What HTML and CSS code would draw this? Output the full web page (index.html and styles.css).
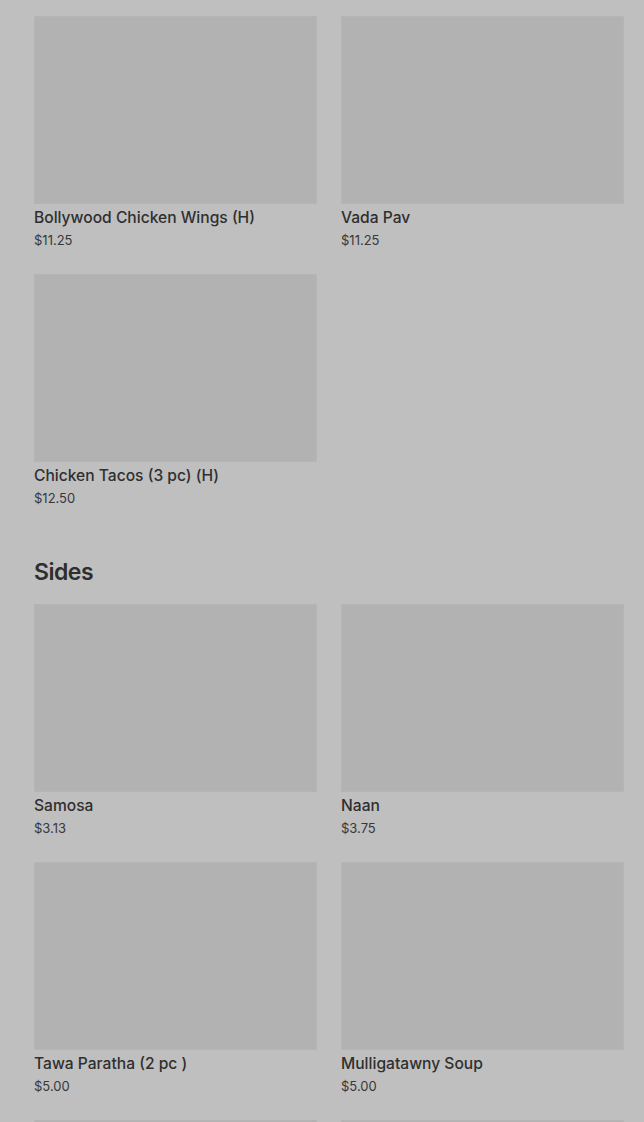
FILE: index.html
```html
<!DOCTYPE html>
<html lang="en">
<head>
<meta charset="utf-8">
<title>Menu</title>
<link rel="stylesheet" href="styles.css">
</head>
<body>
<main class="menu">
  <section class="section">
    <div class="grid">
      <div class="card"><div class="thumb"></div><div class="name">Bollywood Chicken Wings (H)</div><div class="price">$11.25</div></div>
      <div class="card"><div class="thumb"></div><div class="name">Vada Pav</div><div class="price">$11.25</div></div>
      <div class="card"><div class="thumb"></div><div class="name">Chicken Tacos (3 pc) (H)</div><div class="price">$12.50</div></div>
    </div>
  </section>
  <section class="section">
    <h2 class="heading">Sides</h2>
    <div class="grid">
      <div class="card"><div class="thumb"></div><div class="name">Samosa</div><div class="price">$3.13</div></div>
      <div class="card"><div class="thumb"></div><div class="name">Naan</div><div class="price">$3.75</div></div>
      <div class="card"><div class="thumb"></div><div class="name">Tawa Paratha (2 pc )</div><div class="price">$5.00</div></div>
      <div class="card"><div class="thumb"></div><div class="name">Mulligatawny Soup</div><div class="price">$5.00</div></div>
      <div class="card"><div class="thumb"></div></div>
      <div class="card"><div class="thumb"></div></div>
    </div>
  </section>
</main>
</body>
</html>
```
FILE: styles.css
```css
html, body {
  margin: 0;
  padding: 0;
  background: #bfbfbf;
  height: 1122px;
  overflow: hidden;
}
body {
  font-family: Inter, "Noto Sans", sans-serif;
  color: #2f2f2f;
}
.menu {
  padding: 16px 20px 0 34px;
  display: flex;
  flex-direction: column;
  gap: 48px;
}
.grid {
  display: grid;
  grid-template-columns: 283px 283px;
  column-gap: 24px;
  row-gap: 24px;
}
.card {
  display: flex;
  flex-direction: column;
}
.thumb {
  height: 188px;
  background: #b2b2b2;
  box-shadow: inset 0 0 0 1px #b5b5b5;
}
.name {
  font-size: 15.6px;
  font-weight: 500;
  line-height: 24px;
  margin-top: 2px;
}
.price {
  font-size: 13px;
  line-height: 20px;
  font-weight: 400;
  color: #383838;
}
.heading {
  margin: 0 0 16px;
  font-size: 23px;
  line-height: 32px;
  font-weight: 600;
  letter-spacing: -0.5px;
  color: #2e2e2e;
}
```
